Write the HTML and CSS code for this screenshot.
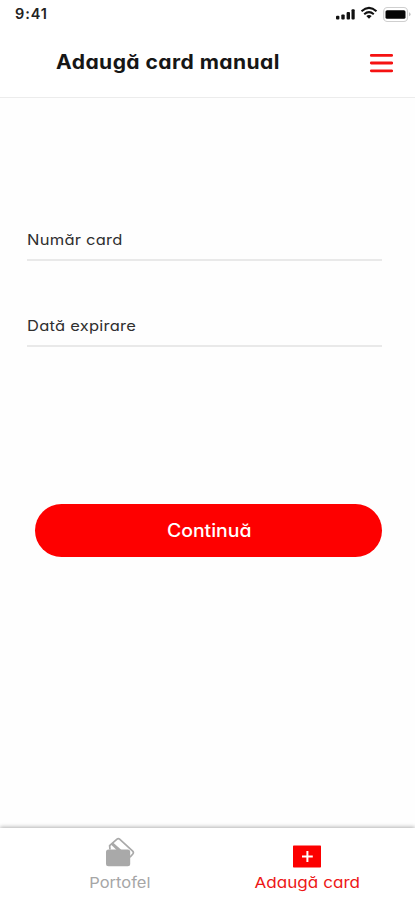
FILE: index.html
```html
<!DOCTYPE html>
<html lang="ro">
<head>
<meta charset="utf-8">
<title>Adaugă card manual</title>
<link rel="stylesheet" href="styles.css">
</head>
<body>
<div class="status">
  <span class="time">9:41</span>
  <svg class="indicators" width="80" height="20" viewBox="0 0 80 20">
    <g fill="#111"><rect x="1" y="12.7" width="3.4" height="3.8" rx="1"/><rect x="6.3" y="11.4" width="3.4" height="5.1" rx="1"/><rect x="11.6" y="8.9" width="3.4" height="7.6" rx="1"/><rect x="16.5" y="6.2" width="3.2" height="10.3" rx="1"/></g>
    <g fill="none" stroke="#111" stroke-width="2"><path d="M26.5 8.2Q34 1.600 41.5 8.2"/><path d="M29.2 11.200Q34 7.100 38.8 11.200"/></g>
    <path d="M31.3 13Q34 10.900 36.7 13L34 15.800Z" fill="#111"/>
    <rect x="48.7" y="4.5" width="23.8" height="14" rx="3.8" fill="none" stroke="#cfcfcf" stroke-width="1.2"/>
    <rect x="50.5" y="7.200" width="20" height="8.6" rx="1.6" fill="#050505"/>
    <path d="M74 9.200q1.6.6 1.6 2t-1.6 2z" fill="#c4c4c4"/>
  </svg>
</div>
<header class="header">
  <h1 class="title">Adaugă card manual</h1>
  <svg class="menu" width="24" height="22" viewBox="0 0 24 22"><path d="M2.300 3.4H22.700M2.300 11H22.700M2.300 18.8H22.700" stroke="#f51212" stroke-width="2.8" stroke-linecap="round"/></svg>
</header>
<main class="main">
  <div class="field number"><span class="label">Număr card</span></div>
  <div class="field expiry"><span class="label">Dată expirare</span></div>
  <button class="submit"><span class="action">Continuă</span></button>
</main>
<nav class="tabs">
  <div class="tab wallet">
    <svg class="icon" width="30" height="32" viewBox="0 0 30 32">
      <path d="M5 13.500L4.600 9.600L12 3.100Q13.300 2 14.600 3.100L27.700 15.200Q29 16.500 27.800 18L25 21.200" fill="none" stroke="#a9a9a9" stroke-width="1.700" stroke-linejoin="round"/>
      <path d="M5.700 8.300L8 6.500L16.500 14H11.500Z" fill="#a9a9a9"/>
      <rect x="1" y="13.600" width="24.2" height="16.6" rx="2.5" fill="#a9a9a9"/>
    </svg>
    <span class="caption">Portofel</span>
  </div>
  <div class="tab add">
    <svg class="icon" width="30" height="32" viewBox="0 0 30 32">
      <rect x="1" y="9.5" width="28" height="22" rx=".7" fill="#fc0000"/>
      <path d="M10 20.5H20.8M15.4 15.1V25.9" stroke="#fff" stroke-width="2"/>
    </svg>
    <span class="caption">Adaugă card</span>
  </div>
</nav>
</body>
</html>
```
FILE: styles.css
```css
* { box-sizing: border-box; }
body {
  margin: 0;
  height: 900px;
  display: flex;
  flex-direction: column;
  overflow: hidden;
  background: #fff;
  color: #222;
  font-family: Inter, "Open Sans", sans-serif;
  font-feature-settings: "cv11" 1;
}
.status {
  height: 28px;
  display: flex;
  justify-content: space-between;
  padding: 0 0 0 15px;
}
.indicators { margin-top: 3px; }
.time { font-size: 14.5px; line-height: 28px; font-weight: 600; letter-spacing: .9px; }
.header {
  height: 70px;
  display: flex;
  justify-content: space-between;
  padding: 24px 22px 0 56px;
  border-bottom: 1px solid #ececec;
}
.title {
  margin: 0;
  font-size: 19.5px;
  line-height: 20px;
  font-weight: 700;
  letter-spacing: .4px;
  color: #161616;
  white-space: nowrap;
  transform: scaleX(1.08);
  transform-origin: left;
}
.main {
  flex: 1;
  display: flex;
  flex-direction: column;
  padding: 132px 33px 0 27px;
  background: #fefefe;
}
.field {
  height: 31px;
  border-bottom: 2px solid #e9e9e9;
  font-size: 14.5px;
  line-height: 20px;
  letter-spacing: .2px;
  color: #303030;
}
.label { display: inline-block; transform: scaleX(1.14); transform-origin: left; }
.expiry { margin-top: 55px; }
.submit {
  height: 53px;
  margin: 157px 0 0 8px;
  padding: 0;
  border: 0;
  border-radius: 27px;
  background: #fe0000;
  color: #fff;
  font: 500 18px/53px Inter, "Open Sans", sans-serif;
  font-feature-settings: "cv11" 1;
}
.action { display: inline-block; padding-left: 1px; transform: scaleX(1.08); }
.tabs {
  position: relative;
  height: 72px;
  display: grid;
  grid-template-columns: 240px 134px;
  background: #fff;
  box-shadow: 0 -1px 4px rgba(0, 0, 0, .3);
}
.tab { display: flex; flex-direction: column; align-items: center; padding-top: 8px; font-size: 15px; line-height: 18px; }
.icon { display: block; margin-bottom: 6px; }
.wallet { color: #a6a6a6; }
.wallet .caption { transform: scaleX(1.1); }
.add { color: #ed1717; }
.add .caption { transform: scaleX(1.14); }
```
